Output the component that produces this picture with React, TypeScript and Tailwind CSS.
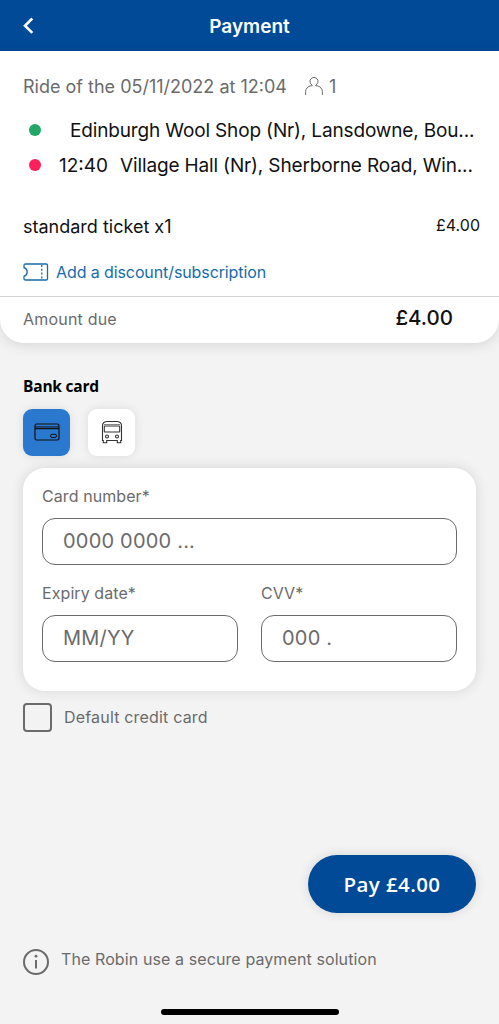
import { useState } from "react";

const stops = [
  {
    id: 1,
    time: "",
    name: "Edinburgh Wool Shop (Nr), Lansdowne, Bou...",
    dot: "bg-[#22a769]",
  },
  {
    id: 2,
    time: "12:40",
    name: "Village Hall (Nr), Sherborne Road, Win...",
    dot: "bg-[#ff1f5a]",
  },
];

export default function App() {
  const [isDefault, setIsDefault] = useState(false);
  return (
    <main className="flex h-[1024px] w-[499px] flex-col overflow-hidden bg-[#f3f3f3] font-['Inter','Liberation_Sans',sans-serif] text-[#6b6b6b]">
      <Header />
      <RideSummary />
      <section className="px-[23px] pt-[33px]">
        <h2 className="h-5 font-['Open_Sans',sans-serif] text-[15.5px] leading-5 font-bold tracking-[-0.2px] text-black">
          Bank card
        </h2>
        <div className="mt-[13px] flex gap-[18px]">
          <button className="flex size-[47px] items-center justify-center rounded-[9px] bg-[#2b78cf] shadow-[0_0_10px_rgba(0,0,0,0.1)]">
            <CardIcon />
          </button>
          <button className="flex size-[47px] items-center justify-center rounded-[9px] bg-white shadow-[0_0_10px_rgba(0,0,0,0.1)]">
            <BusIcon />
          </button>
        </div>
        <CardForm />
        <label className="mt-3 flex h-[29px] items-center">
          <input
            type="checkbox"
            checked={isDefault}
            onChange={(e) => setIsDefault(e.target.checked)}
            className="size-[29px] appearance-none rounded-[4px] border-2 border-[#6b6b6b] checked:bg-[#2b78cf]"
          />
          <span className="ml-3 pb-px text-[16px] tracking-[0.18px]">
            Default credit card
          </span>
        </label>
      </section>
      <Footer />
    </main>
  );
}

const Header = () => {
  return (
    <header className="flex h-[51px] shrink-0 items-center bg-[#004a98] text-white">
      <button className="w-[60px] pl-[22px]">
        <svg width="13" height="18" viewBox="0 0 13 18" fill="none">
          <path
            d="M10.3 1.5 3 8.7l7.3 7.2"
            stroke="currentColor"
            strokeWidth="2.6"
          />
        </svg>
      </button>
      <h1 className="flex-1 pt-[3px] pr-[60px] text-center text-[19px] font-semibold">
        Payment
      </h1>
    </header>
  );
};

const RideSummary = () => {
  return (
    <section className="h-[292px] shrink-0 rounded-b-[24px] bg-white shadow-[0_2px_14px_rgba(0,0,0,0.12)]">
      <div className="flex h-[61px] items-center pt-[9px] pl-[23px] text-[18px]">
        <span>Ride of the 05/11/2022 at 12:04</span>
        <svg
          className="ml-[18px]"
          width="18"
          height="19"
          viewBox="0 0 18 19"
          fill="none"
          stroke="currentColor"
        >
          <path d="M.6 18V14.5c0-2.8 2.2-5 5.2-5.7M17.4 18V14.5c0-2.8-2.2-5-5.2-5.7" />
          <path d="M5.8 8.8h1.4V8a4 4 0 1 1 3.6 0v.8h1.4" />
        </svg>
        <span className="ml-[6px]">1</span>
      </div>
      {stops.map((stop) => (
        <div
          key={stop.id}
          className="flex h-[35px] items-center pl-[29px] text-[19px] whitespace-nowrap text-[#111]"
        >
          <span className={`size-3 shrink-0 rounded-full ${stop.dot}`} />
          {stop.time && (
            <span className="ml-[18px] pt-[3px]">{stop.time}</span>
          )}
          <span
            className={
              stop.time
                ? "ml-[12px] pt-[3px] tracking-[-0.15px]"
                : "ml-[29px] pt-[3px] tracking-[-0.15px]"
            }
          >
            {stop.name}
          </span>
        </div>
      ))}
      <div className="mt-[31px] flex h-[26px] items-center justify-between pr-[19px] pl-[23px] text-[#111]">
        <span className="text-[18px]">standard ticket x1</span>
        <span className="pb-[3px] text-[16px]">£4.00</span>
      </div>
      <a
        href="#"
        className="mt-[19px] flex h-[27px] items-center pl-[23px] text-[16px] text-[#166bab]"
      >
        <TicketIcon />
        <span className="ml-[7px] pt-px tracking-[-0.1px]">
          Add a discount/subscription
        </span>
      </a>
      <div className="mt-[11px] flex h-[46px] items-center justify-between border-t border-[#d4d4d4] pr-[46px] pb-[2px] pl-[23px]">
        <span className="text-[16px] tracking-[0.2px]">Amount due</span>
        <span className="text-[20.5px] font-medium text-[#111]">£4.00</span>
      </div>
    </section>
  );
};

const CardForm = () => {
  return (
    <div className="mt-3 h-[223px] w-[453px] rounded-[22px] bg-white px-[19px] pt-[18px] shadow-[0_0_14px_rgba(0,0,0,0.12)]">
      <Field label="Card number*" placeholder="0000 0000 ..." />
      <div className="mt-[18px] flex gap-[23px]">
        <Field label="Expiry date*" placeholder="MM/YY" />
        <Field label="CVV*" placeholder="000 ." />
      </div>
    </div>
  );
};

const Field = ({
  label,
  placeholder,
}: {
  label: string;
  placeholder: string;
}) => {
  return (
    <label className="block min-w-0 flex-1">
      <span className="block h-5 text-[16px] leading-5 tracking-[0.08px]">
        {label}
      </span>
      <input
        type="text"
        placeholder={placeholder}
        className="mt-3 block h-[47px] w-full rounded-[13px] border border-[#6b6b6b] bg-white px-[20px] pb-px text-[20px] tracking-[0.2px] placeholder:text-[#6b6b6b] focus:outline-0"
      />
    </label>
  );
};

const Footer = () => {
  return (
    <footer className="mt-auto flex flex-col">
      <button className="mr-[23px] h-[58px] w-[168px] self-end rounded-full bg-[#004a98] font-['Open_Sans',sans-serif] text-[20.5px] font-semibold tracking-[0.4px] text-white shadow-[0_0_12px_rgba(0,0,0,0.12)]">
        Pay £4.00
      </button>
      <div className="mt-[31px] flex h-[30px] items-center pl-[23px]">
        <svg
          className="mt-[5px]"
          width="26"
          height="26"
          viewBox="0 0 26 26"
          fill="none"
          stroke="currentColor"
        >
          <circle cx="13" cy="13" r="12" strokeWidth="2" />
          <path d="M13 11v8.5" strokeWidth="2" />
          <circle cx="13" cy="7.2" r="1.4" fill="currentColor" stroke="none" />
        </svg>
        <span className="ml-3 pb-px text-[16px] tracking-[0.1px]">
          The Robin use a secure payment solution
        </span>
      </div>
      <div className="mt-[35px] mb-[9px] h-[6px] w-[178px] self-center rounded-full bg-black" />
    </footer>
  );
};

const TicketIcon = () => (
  <svg
    width="26"
    height="18"
    viewBox="0 0 26 18"
    fill="none"
    stroke="currentColor"
    strokeWidth="1.3"
  >
    <path d="M2.5 1h20.7c.8 0 1.3.5 1.3 1.3v13.4c0 .8-.5 1.3-1.3 1.3H2.5C1.5 17 1 16.5 1 15.5v-2.2c2-.7 3.200-2.300 3.200-4.300S3 5.400 1 4.700V2.500C1 1.500 1.500 1 2.500 1Z" />
    <path d="M18.8 2v15" strokeDasharray="2 1.8" />
  </svg>
);

const CardIcon = () => (
  <svg
    className="-mt-[2px]"
    width="26"
    height="18"
    viewBox="0 0 26 18"
    fill="none"
    stroke="#111"
    strokeWidth="1.2"
  >
    <rect x="1" y="1" width="24" height="16" rx="1.5" />
    <path d="M1 3.8h24" strokeWidth=".8" />
    <path d="M1 5.5h24" strokeWidth="1.5" />
    <rect x="16.5" y="11.3" width="6" height="3.2" rx="1.6" strokeWidth="1" />
  </svg>
);

const BusIcon = () => (
  <svg
    className="-mt-[1px]"
    width="22"
    height="24"
    viewBox="0 0 22 24"
    fill="none"
    stroke="#333"
    strokeWidth="1.1"
  >
    <path d="M1.5 20.5V6c0-3.2 2-4.5 5-4.5h9c3 0 5 1.3 5 4.5v14.5h-.8v2.3h-3.4v-2.3H5.7v2.3H2.3v-2.3Z" />
    <rect x="3.3" y="6" width="15.4" height="6" rx=".5" />
    <path d="M3 4.500h16" strokeWidth=".6" />
    <circle cx="6" cy="16.500" r="1.500" />
    <circle cx="16" cy="16.500" r="1.500" />
  </svg>
);
